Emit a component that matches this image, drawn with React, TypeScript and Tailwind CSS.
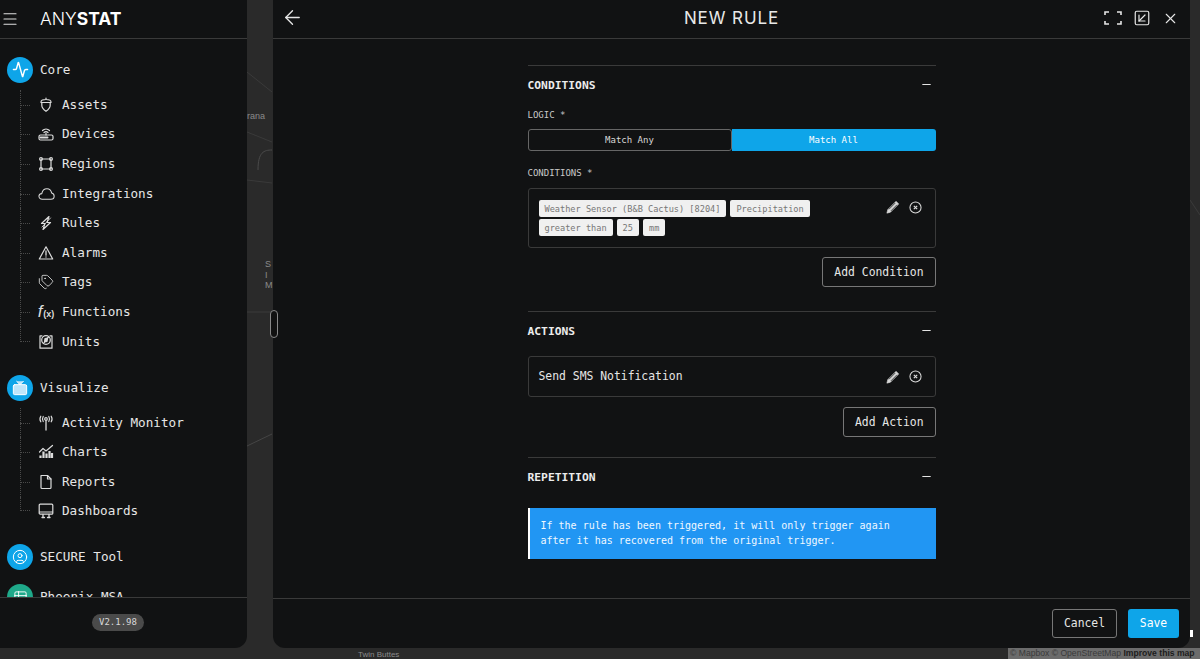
import type { ReactNode } from 'react';
import {
  Activity,
  ArrowLeft,
  CircleUser,
  Menu,
  Minus,
  SquareArrowDownLeft,
  Table2,
  Tags,
  Tv,
  X,
} from 'lucide-react';

const mono = 'font-["DejaVu_Sans_Mono",monospace]';

function Glyph({ children, w = 16 }: { children: ReactNode; w?: number }) {
  return (
    <svg viewBox={`0 0 ${w} 16`} width={w} height={16} fill="none" stroke="currentColor" strokeWidth="1.2" strokeLinecap="round" strokeLinejoin="round">
      {children}
    </svg>
  );
}

function AcornIcon() {
  return (
    <Glyph>
      <path d="M8 1v1.500M3 5c0-1.600 2-2.500 5-2.500S13 3.400 13 5v.500H3z" />
      <path d="M3.800 5.500v2.800c0 2.800 2 4.500 4.200 6 2.200-1.500 4.200-3.200 4.200-6V5.500" />
    </Glyph>
  );
}

function DeviceIcon() {
  return (
    <Glyph>
      <path d="M4.500 4.500C6.500 2.500 9.500 2.500 11.500 4.500M6 6.500c1.200-1 2.800-1 4 0" />
      <path d="M8 7v2" />
      <rect x="1" y="9" width="14" height="5" rx="1.500" />
      <path d="M2.500 11.500h7" strokeWidth="2" />
    </Glyph>
  );
}

function RegionIcon() {
  return (
    <Glyph>
      <path d="M3.500 3h9M3.500 13h9M3 3.500v9M13 3.500v9" />
      <circle cx="3" cy="3" r="1.400" />
      <circle cx="13" cy="3" r="1.400" />
      <circle cx="3" cy="13" r="1.400" />
      <circle cx="13" cy="13" r="1.400" />
    </Glyph>
  );
}

function CloudIcon() {
  return (
    <svg viewBox="0 0 18 14" width={17} height={14} fill="none" stroke="currentColor" strokeWidth="1.1">
      <path d="M4.500 12.500C2.500 12.500 1 11.200 1 9.500 1 7.800 2.300 6.700 4 6.600 4.600 3.500 6.800 1.500 9.500 1.500c2.600 0 4.500 2 5 4.500 1.600.4 2.600 1.800 2.600 3.300 0 1.900-1.500 3.200-3.400 3.200z" />
    </svg>
  );
}

function BoltIcon() {
  return (
    <Glyph>
      <path d="M11 1.500 3.500 8.500H7L5 14.500l7.500-7H9z" />
      <path d="M12.500 3 4 12" strokeWidth="0.9" />
    </Glyph>
  );
}

function AlarmIcon() {
  return (
    <Glyph>
      <path d="M8 1.800 14.700 14H1.300z" />
      <path d="M8 6v4.200M8 11.800v.3" strokeWidth="1.300" />
    </Glyph>
  );
}

function UnitsIcon() {
  return (
    <Glyph>
      <path d="M4 1.800H2v12.400h12V1.800h-2" />
      <circle cx="8" cy="6" r="4.300" />
      <path d="M8 6 10.500 3M5.500 9.500 8 6" />
      <path d="M7 4.500 9.500 4 9 7.500 6.500 8z" fill="currentColor" />
    </Glyph>
  );
}

function FunctionIcon() {
  return (
    <span className="flex items-baseline leading-none whitespace-nowrap font-['Liberation_Sans',sans-serif] text-[#dcdcdc]">
      <span className="text-[17px] font-light italic">f</span>
      <span className="text-[9px] font-bold ml-[1px]">(x)</span>
    </span>
  );
}

function AntennaIcon() {
  return (
    <Glyph>
      <path d="M8 6v9" strokeWidth="1.300" />
      <circle cx="8" cy="4" r="1.300" />
      <path d="M5.200 1.500C4.300 3 4.300 5 5.200 6.500M10.800 1.500c.9 1.500.9 3.500 0 5M2.800 1.200C1.700 3 1.700 5 2.800 6.800M13.200 1.200c1.100 1.800 1.100 3.800 0 5.600" />
    </Glyph>
  );
}

function ChartsIcon() {
  return (
    <Glyph>
      <path d="M1.500 8 5 4.500 8 7l6.500-5.500" />
      <path d="M2.500 14v-2.500M5.500 14V7.500M8.500 14V9.500M11.500 14V7M14 14V9" strokeWidth="2.200" strokeLinecap="butt" />
    </Glyph>
  );
}

function FileIcon() {
  return (
    <Glyph>
      <path d="M3 1.500h6.500L13 5v8.500a1 1 0 0 1-1 1H4a1 1 0 0 1-1-1z" />
      <path d="M9.500 1.500V5H13" />
    </Glyph>
  );
}

function MonitorIcon() {
  return (
    <Glyph>
      <rect x="1.200" y="1.200" width="13.600" height="10" rx="1" />
      <path d="M1.500 9h13" />
      <path d="M4 14.500h2.500M9.500 14.500H12M5 11.500v3M11 11.500v3" strokeWidth="1.300" />
    </Glyph>
  );
}

function PencilIcon() {
  return (
    <svg viewBox="0 0 16 16" width={14} height={14} fill="#d8d8d8" stroke="#d8d8d8" strokeWidth="0.700" strokeLinejoin="round">
      <path d="M11.500 1.500 14.500 4.500 5 14 1 15 2 11z" />
      <path d="M3.500 10.500 10.500 3.500M5.500 12.500 12.500 5.500" stroke="#111213" strokeWidth="0.800" />
    </svg>
  );
}

function CloseRoundIcon() {
  return (
    <svg viewBox="0 0 14 14" width={13} height={13} fill="none" stroke="#dcdcdc" strokeWidth="1.100">
      <circle cx="7" cy="7" r="6" />
      <path d="M5.200 5.200 8.800 8.800M8.800 5.200 5.200 8.800" strokeWidth="1.300" />
    </svg>
  );
}

function ExpandIcon() {
  return (
    <svg viewBox="0 0 18 14" className="w-[18px] h-[14px]" fill="none" stroke="currentColor" strokeWidth="1.600">
      <path d="M1 4V1h4M13 1h4v3M17 10v3h-4M5 13H1v-3" />
    </svg>
  );
}

function NavItem({ icon, label, last }: { icon: ReactNode; label: string; last?: boolean }) {
  return (
    <div className="relative h-[29.6px] flex items-center">
      <span
        className={`absolute left-0 top-0 w-[10px] border-l border-dotted border-[#4a4a4a] ${last ? 'h-1/2 border-b' : 'h-full'}`}
      />
      {!last && <span className="absolute left-0 top-1/2 w-[10px] border-t border-dotted border-[#4a4a4a]" />}
      <span className="ml-[16px] w-[20px] mr-[6px] flex justify-center text-[#dcdcdc]">{icon}</span>
      <span className="text-[12.65px] text-[#e6e6e6] pt-[1px]">{label}</span>
    </div>
  );
}

function Group({ icon, label, color = 'bg-[#0ea5e9]' }: { icon: ReactNode; label: string; color?: string }) {
  return (
    <div className="flex items-center h-[26px] pl-[7px] gap-[7px]">
      <span className={`w-[26px] h-[26px] rounded-full flex items-center justify-center text-white shrink-0 ${color}`}>{icon}</span>
      <span className="text-[12.65px] text-[#e6e6e6] whitespace-nowrap pt-[1px]">{label}</span>
    </div>
  );
}

function SectionHeader({ title }: { title: string }) {
  return (
    <div className="h-[39px] flex items-center justify-between">
      <span className="text-[11.3px] font-bold text-[#ececec] pt-[2px]">{title}</span>
      <Minus size={13} className="text-[#e4e4e4] mr-[3px] mb-[2px]" />
    </div>
  );
}

function RowActions() {
  return (
    <div className="flex items-center gap-[9px]">
      <PencilIcon />
      <CloseRoundIcon />
    </div>
  );
}

function Chip({ children }: { children: ReactNode }) {
  return <span className="h-[17px] px-[6px] pt-[1px] rounded-[2px] bg-[#f0f0f0] text-[#777] text-[8.6px] flex items-center whitespace-nowrap">{children}</span>;
}

function OutlineButton({ label }: { label: string }) {
  return (
    <button className="h-[30px] px-[11px] pt-[1px] rounded-[3px] border border-[#777] text-[11.4px] text-[#e6e6e6] bg-transparent">
      {label}
    </button>
  );
}

export default function App() {
  return (
    <div className={`relative h-[659px] w-[1200px] overflow-hidden bg-[#2a2a2a] ${mono}`}>
      {/* map behind the panels */}
      <svg viewBox="0 0 1200 659" className="absolute inset-0 w-full h-full" fill="none" stroke="#3a3a3a">
        <path d="M247 72 L272 92" />
        <path d="M247 132 L272 142" />
        <path d="M258 170 C258 152 264 150 272 150" stroke="#4a4a4a" />
        <path d="M247 180 L272 183" />
        <path d="M247 312 L272 312" />
        <path d="M247 446 L272 434" stroke="#454545" />
        <path d="M1190 200 L1200 215" />
      </svg>
      <span className="absolute left-[247px] top-[110px] text-[9px] text-[#8a8a8a] font-['Liberation_Sans',sans-serif]">rana</span>
      <span className="absolute left-[265px] top-[259px] text-[9px] leading-[10.500px] text-[#8a8a8a] font-['Liberation_Sans',sans-serif]">
        S
        <br />I
        <br />M
      </span>
      <span className="absolute left-[358px] top-[650px] text-[8px] leading-[9px] text-[#8a8a8a] font-['Liberation_Sans',sans-serif]">Twin Buttes</span>
      <span className="absolute right-0 bottom-0 h-[11px] w-[192px] bg-[#6c6c6c] text-[8.6px] leading-[11px] text-[#3a3a3a] pl-[2px] whitespace-nowrap font-['Liberation_Sans',sans-serif]">
        © Mapbox © OpenStreetMap <b className="text-[#1c1c1c]">Improve this map</b>
      </span>
      <span className="absolute left-[1190px] top-[630px] w-[3px] h-[7px] bg-white" />

      <div className="relative flex h-[648px]">
        {/* sidebar */}
        <aside className="w-[247px] h-full bg-[#111213] rounded-br-xl flex flex-col">
          <div className="h-[39px] shrink-0 border-b border-[#3a3a3a] flex items-center">
            <Menu size={18} className="ml-[1px] text-[#e0e0e0]" strokeWidth={1.5} />
            <span className="ml-[21px] text-[17.5px] text-white font-['Inter',sans-serif] font-light tracking-[0px]">
              ANY<b className="font-bold">STAT</b>
            </span>
          </div>
          <nav className="flex-1 min-h-0 overflow-hidden pt-[17.5px]">
            <Group icon={<Activity size={17} />} label="Core" />
            <div className="ml-[20px] mt-[7.5px]">
              <NavItem icon={<AcornIcon />} label="Assets" />
              <NavItem icon={<DeviceIcon />} label="Devices" />
              <NavItem icon={<RegionIcon />} label="Regions" />
              <NavItem icon={<CloudIcon />} label="Integrations" />
              <NavItem icon={<BoltIcon />} label="Rules" />
              <NavItem icon={<AlarmIcon />} label="Alarms" />
              <NavItem icon={<Tags size={16} strokeWidth={1.3} />} label="Tags" />
              <NavItem icon={<FunctionIcon />} label="Functions" />
              <NavItem icon={<UnitsIcon />} label="Units" last />
            </div>
            <div className="mt-[18.5px]">
              <Group icon={<Tv size={16} fill="#bfe6fa" strokeWidth={1.5} />} label="Visualize" />
            </div>
            <div className="ml-[20px] mt-[7px]">
              <NavItem icon={<AntennaIcon />} label="Activity Monitor" />
              <NavItem icon={<ChartsIcon />} label="Charts" />
              <NavItem icon={<FileIcon />} label="Reports" />
              <NavItem icon={<MonitorIcon />} label="Dashboards" last />
            </div>
            <div className="mt-[18px]">
              <Group icon={<CircleUser size={16} strokeWidth={1.5} />} label="SECURE Tool" />
            </div>
            <div className="mt-[14px]">
              <Group icon={<Table2 size={15} strokeWidth={1.5} />} label="Phoenix MSA" color="bg-[#1fa98a]" />
            </div>
          </nav>
          <div className="h-[51px] shrink-0 border-t border-[#3a3a3a] pt-[16px] pl-[92px] flex items-start">
            <span className="flex h-[17px] px-[7px] rounded-full bg-[#4a4a4a] text-[9px] text-[#d8d8d8] items-center">V2.1.98</span>
          </div>
        </aside>

        {/* rule editor */}
        <main className="ml-[26px] w-[917px] h-full bg-[#111213] rounded-b-xl flex flex-col">
          <header className="h-[39px] shrink-0 border-b border-[#3a3a3a] relative flex items-center justify-center">
            <ArrowLeft size={23} strokeWidth={1.4} className="absolute left-[8px] top-[6px] text-[#e6e6e6]" />
            <h1 className="text-[17px] text-[#e8e8e8] font-['Inter',sans-serif] font-normal tracking-[0.9px]">NEW RULE</h1>
            <div className="absolute right-[11px] top-[9px] flex items-center gap-[11px] text-[#e6e6e6]">
              <ExpandIcon />
              <SquareArrowDownLeft size={18} strokeWidth={1.6} />
              <X size={17} strokeWidth={1.5} />
            </div>
          </header>

          <div className="flex-1 min-h-0 overflow-hidden">
            <div className="w-[408px] mx-auto mt-[26px]">
              <section className="border-t border-[#3a3a3a]">
                <SectionHeader title="CONDITIONS" />
                <label className="h-[20px] pt-[2px] flex items-center text-[9px] text-[#c8c8c8]">LOGIC *</label>
                <div className="mt-[4px] h-[22px] grid grid-cols-2 text-[9px]">
                  <button className="rounded-[3px] border border-[#666] text-[#d8d8d8] pt-[1px]">Match Any</button>
                  <button className="rounded-r-[3px] bg-[#0ea5e9] text-white pt-[1px]">Match All</button>
                </div>
                <label className="mt-[12px] h-[20px] pt-[2px] flex items-center text-[9px] text-[#c8c8c8]">CONDITIONS *</label>
                <div className="mt-[5px] h-[60px] rounded-[3px] border border-[#3a3a3a] pl-[10px] pr-[13px] pt-[11px] flex justify-between">
                  <div className="w-[300px] flex flex-wrap gap-x-[4px] gap-y-[2px] content-start">
                    <Chip>Weather Sensor (B&amp;B Cactus) [8204]</Chip>
                    <Chip>Precipitation</Chip>
                    <Chip>greater than</Chip>
                    <Chip>25</Chip>
                    <Chip>mm</Chip>
                  </div>
                  <div className="h-[17px]">
                    <RowActions />
                  </div>
                </div>
                <div className="mt-[9px] flex justify-end">
                  <OutlineButton label="Add Condition" />
                </div>
              </section>

              <section className="mt-[24px] border-t border-[#3a3a3a]">
                <SectionHeader title="ACTIONS" />
                <div className="mt-[5px] h-[41px] rounded-[3px] border border-[#3a3a3a] pl-[10px] pr-[13px] flex items-center justify-between">
                  <span className="text-[11.4px] text-[#e6e6e6]">Send SMS Notification</span>
                  <RowActions />
                </div>
                <div className="mt-[10px] flex justify-end">
                  <OutlineButton label="Add Action" />
                </div>
              </section>

              <section className="mt-[20px] border-t border-[#3a3a3a]">
                <SectionHeader title="REPETITION" />
                <p className="mt-[11px] h-[51px] bg-[#2196f3] border-l-2 border-white pl-[11px] pb-[2px] flex items-center text-[10px] leading-[15px] text-[#f0f8ff]">
                  If the rule has been triggered, it will only trigger again
                  <br />
                  after it has recovered from the original trigger.
                </p>
              </section>
            </div>
          </div>

          <footer className="h-[50px] shrink-0 border-t border-[#3a3a3a] flex justify-end items-start gap-[11px] pt-[10px] pr-[11px]">
            <button className="h-[29px] w-[65px] rounded-[3px] border border-[#777] text-[11.4px] text-[#e6e6e6]">Cancel</button>
            <button className="h-[29px] w-[51px] rounded-[3px] bg-[#0ea5e9] text-[11.4px] text-white">Save</button>
          </footer>
        </main>
      </div>

      {/* resize handle between sidebar and panel */}
      <span className="absolute left-[270px] top-[310px] w-[8px] h-[28px] rounded-full bg-[#111] border border-[#888]" />
    </div>
  );
}
